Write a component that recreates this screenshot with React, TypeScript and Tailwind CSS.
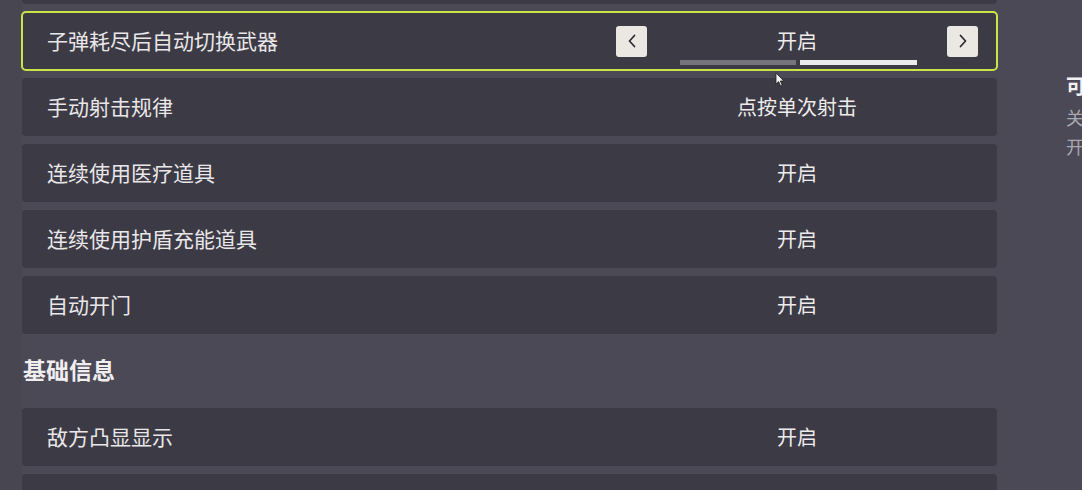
import React from 'react';

type Row = { label: string; value: string; active?: boolean };

const topRows: Row[] = [
  { label: '子弹耗尽后自动切换武器', value: '开启', active: true },
  { label: '手动射击规律', value: '点按单次射击' },
  { label: '连续使用医疗道具', value: '开启' },
  { label: '连续使用护盾充能道具', value: '开启' },
  { label: '自动开门', value: '开启' },
];

const bottomRows: Row[] = [
  { label: '敌方凸显显示', value: '开启' },
  { label: '', value: '' },
];

const font = { fontFamily: '"Noto Sans CJK SC", "Noto Sans", sans-serif' };

const Chevron: React.FC<{ dir: 'left' | 'right' }> = ({ dir }) => (
  <svg width="12" height="16" viewBox="0 0 12 16" fill="none">
    <path
      d={dir === 'left' ? 'M8.5 2.5 L3.5 8 L8.5 13.5' : 'M3.5 2.5 L8.5 8 L3.5 13.5'}
      stroke="#2a2830"
      strokeWidth="1.7"
      strokeLinecap="round"
      strokeLinejoin="round"
    />
  </svg>
);

const SettingRow: React.FC<{ row: Row }> = ({ row }) => (
  <div
    className={
      'relative flex h-[58px] shrink-0 items-center rounded bg-[#3c3a44] ' +
      (row.active ? 'outline-2 -outline-offset-1 outline-[#c9e445]' : '')
    }
  >
    <div className="flex-1 pl-[25px] text-[21px] text-[#e9e7ea]">{row.label}</div>
    <div className="relative mr-[19px] flex h-full w-[362px] items-center justify-between">
      {row.active ? (
        <div className="flex h-[31px] w-[31px] items-center justify-center rounded-[3px] bg-[#ebe8e3]">
          <Chevron dir="left" />
        </div>
      ) : (
        <div className="w-[31px]" />
      )}
      <div className="text-[20px] text-[#eeecef]">{row.value}</div>
      {row.active ? (
        <div className="flex h-[31px] w-[31px] items-center justify-center rounded-[3px] bg-[#ebe8e3]">
          <Chevron dir="right" />
        </div>
      ) : (
        <div className="w-[31px]" />
      )}
      {row.active && (
        <div className="absolute left-[64px] top-[48px] flex gap-[4px]">
          <div className="h-[5px] w-[116px] bg-[#77757c]" />
          <div className="h-[5px] w-[117px] bg-[#ecebec]" />
        </div>
      )}
    </div>
  </div>
);

export default function App() {
  return (
    <div
      className="relative flex h-[490px] w-[1082px] overflow-hidden bg-[#4b4955]"
      style={font}
    >
      <div className="w-[22px] shrink-0 bg-[#484651]" />
      <div className="-mt-[54px] flex w-[975px] shrink-0 flex-col gap-[8px]">
        <div className="h-[58px] shrink-0 rounded bg-[#3c3a44]" />
        {topRows.map((r) => (
          <SettingRow key={r.label} row={r} />
        ))}
        <div className="flex h-[58px] shrink-0 items-center pb-[4px] pl-[1px] text-[23px] font-bold text-[#f0eef0]">
          基础信息
        </div>
        {bottomRows.map((r, i) => (
          <SettingRow key={i} row={r} />
        ))}
      </div>
      <div className="ml-[69px] flex flex-col pt-[71px] text-[18px] leading-[29px]">
        <div className="mb-[3px] text-[20px] font-bold text-[#f2f0f2]">可</div>
        <div className="text-[#a9a7b0]">关</div>
        <div className="text-[#a9a7b0]">开</div>
      </div>
      <svg
        className="absolute left-[775px] top-[72px]"
        width="10"
        height="15"
        viewBox="0 0 10 15"
      >
        <path d="M1 1 L1 12 L3.6 9.6 L5.6 14 L7.2 13.3 L5.3 9 L8.8 9 Z" fill="#f4f4f4" stroke="#222" strokeWidth="0.8" />
      </svg>
    </div>
  );
}
